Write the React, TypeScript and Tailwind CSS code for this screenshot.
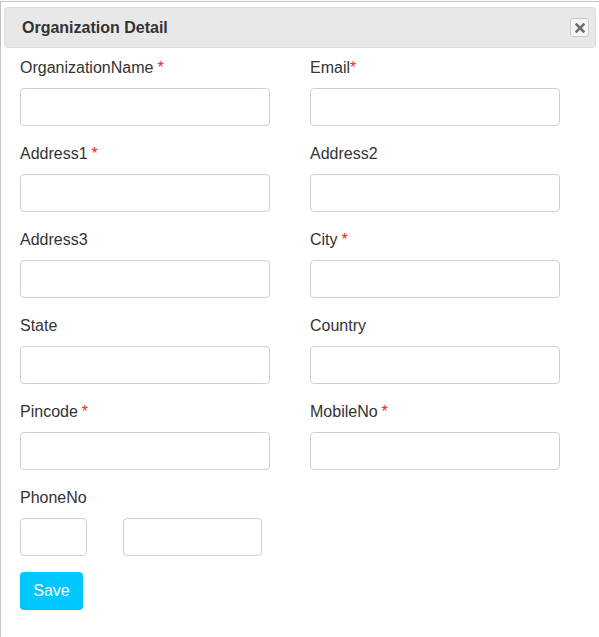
const Label = ({ text, required, tight }: { text: string; required?: boolean; tight?: boolean }) => (
  <div className="h-5 leading-5 text-[16px] text-[#333]">
    {text}
    {required && <span className={`text-[#ff2020] ${tight ? "" : "ml-1"}`}>*</span>}
  </div>
);

const Input = ({ className = "w-[250px]" }: { className?: string }) => (
  <input className={`mt-[10px] block h-[38px] rounded border border-[#ccd0d6] bg-white ${className}`} />
);

const fields: { text: string; required?: boolean; tight?: boolean }[][] = [
  [{ text: "OrganizationName", required: true }, { text: "Email", required: true, tight: true }],
  [{ text: "Address1", required: true }, { text: "Address2" }],
  [{ text: "Address3" }, { text: "City", required: true }],
  [{ text: "State" }, { text: "Country" }],
  [{ text: "Pincode", required: true }, { text: "MobileNo", required: true }],
];

export default function App() {
  return (
    <div className="w-[599px] h-[637px] bg-white pt-px font-['Liberation_Sans',Arial,sans-serif]">
      <div className="h-full border-l border-t border-[#c4c4c4] pl-[3px] pt-[5px]">
        <div className="flex h-[41px] w-[592px] items-center justify-between rounded border border-[#dcdcdc] bg-[#e8e8e8] pl-[17px] pr-[6px]">
          <span className="text-[16px] font-bold text-[#333]">Organization Detail</span>
          <button className="flex h-[19px] w-[19px] items-center justify-center rounded-[3px] border border-[#c8c8c8] bg-[#f6f6f6]">
            <svg width="10" height="10" viewBox="0 0 10 10">
              <path d="M1.5 1.5 L8.5 8.5 M8.5 1.5 L1.5 8.5" stroke="#6e6e6e" strokeWidth="2.6" strokeLinecap="square" />
            </svg>
          </button>
        </div>

        <div className="pl-[16px] pt-[10px]">
          {fields.map((row, i) => (
            <div key={i} className="mb-[18px] flex gap-10">
              {row.map((f) => (
                <div key={f.text} className="w-[250px]">
                  <Label {...f} />
                  <Input />
                </div>
              ))}
            </div>
          ))}

          <Label text="PhoneNo" />
          <div className="flex gap-9">
            <Input className="w-[67px]" />
            <Input className="w-[139px]" />
          </div>

          <button className="mt-4 h-[38px] w-[63px] rounded bg-[#00c8ff] text-[16px] text-white">Save</button>
        </div>
      </div>
    </div>
  );
}
